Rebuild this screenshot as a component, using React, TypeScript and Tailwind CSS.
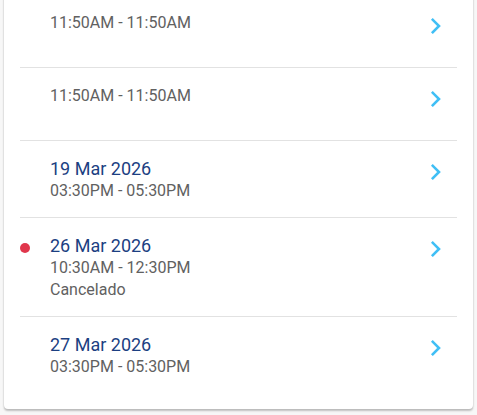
import React from "react";

type Row = {
  date?: string;
  time: string;
  status?: string;
  alert?: boolean;
};

const rows: Row[] = [
  { time: "11:50AM - 11:50AM" },
  { time: "11:50AM - 11:50AM" },
  { date: "19 Mar 2026", time: "03:30PM - 05:30PM" },
  { date: "26 Mar 2026", time: "10:30AM - 12:30PM", status: "Cancelado", alert: true },
  { date: "27 Mar 2026", time: "03:30PM - 05:30PM" },
];

const Chevron = () => (
  <svg width="12" height="16" viewBox="0 0 12 16" fill="none" className="mt-[6px]">
    <path d="M2.8 1.8 L9 8 L2.8 14.2" stroke="#40bff5" strokeWidth="2.6" strokeLinecap="square" />
  </svg>
);

export default function App() {
  return (
    <div className="min-h-screen bg-[#f7f7f7] px-1 pb-[7px] font-['Roboto',sans-serif] -mt-[5px]">
      <div className="bg-white rounded-b shadow-[0_2px_2px_rgba(0,0,0,0.22),0_0_2px_rgba(0,0,0,0.12)] pb-[16px]">
        {rows.map((r, i) => (
          <div
            key={i}
            className={`flex mx-4 ${i < rows.length - 1 ? "border-b border-[#e2e2e2]" : ""} ${
              r.date ? "" : "min-h-[73px]"
            }`}
          >
            <div className="w-[30px] pt-[25px]">
              {r.alert && <div className="w-[10px] h-[10px] rounded-full bg-[#e0364c]" />}
            </div>
            <div className="flex-1 pt-[17px] pb-[15px] text-[16px] leading-[22px]">
              {r.date && <div className="text-[#1c3f82] text-[18px]">{r.date}</div>}
              <div className="text-[#616161]">{r.time}</div>
              {r.status && <div className="text-[#616161]">{r.status}</div>}
            </div>
            <div className="pr-[15px] pt-[17px]">
              <Chevron />
            </div>
          </div>
        ))}
      </div>
    </div>
  );
}
